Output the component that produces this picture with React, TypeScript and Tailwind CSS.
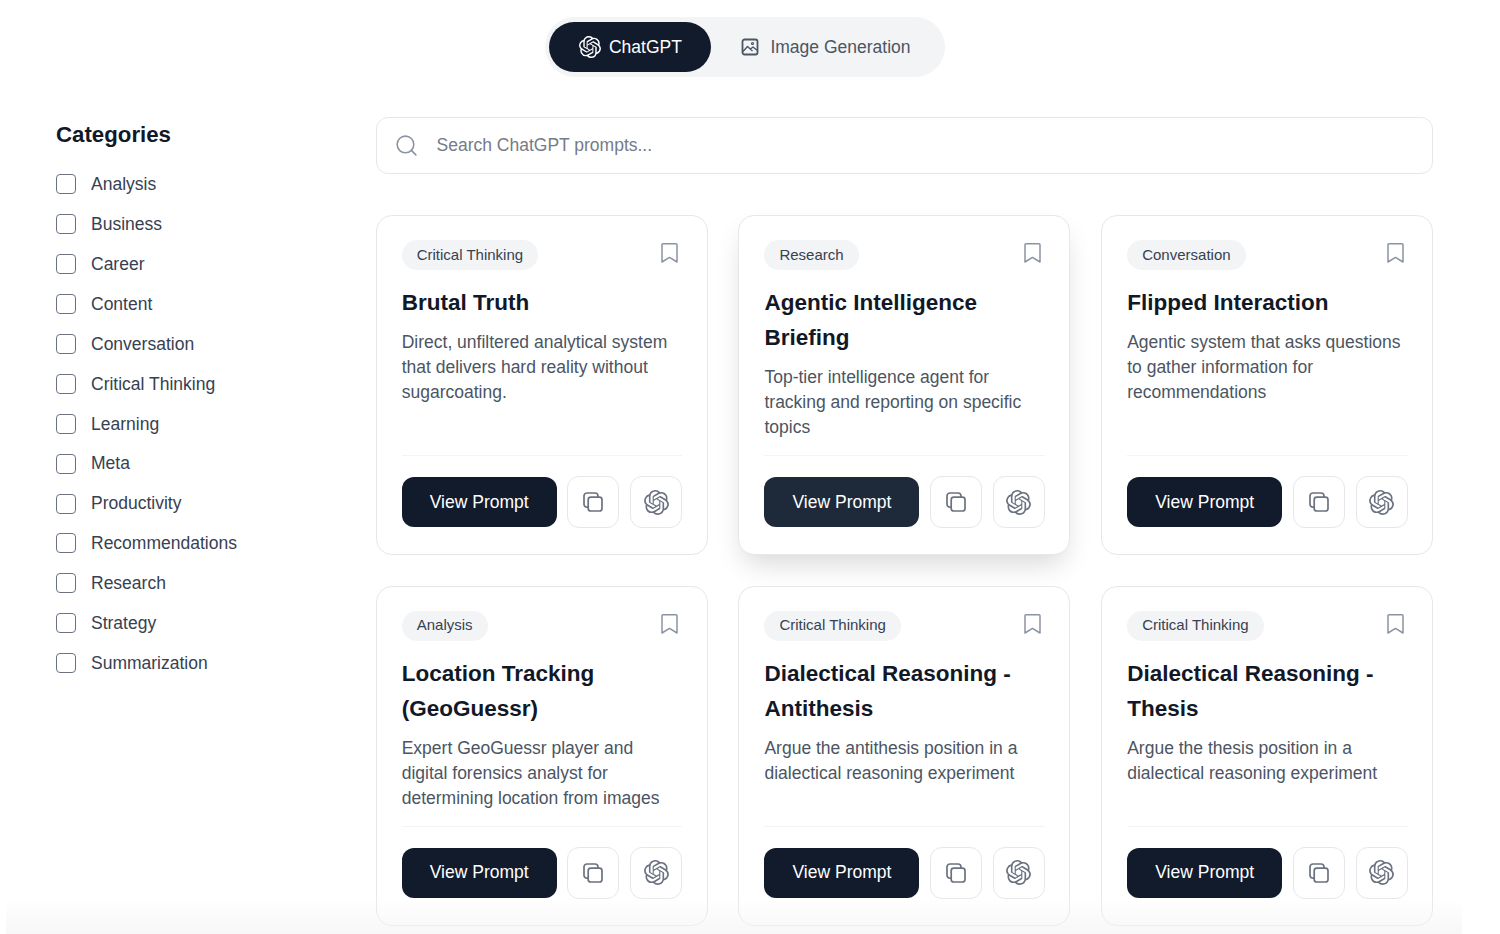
import React from "react";
import { Search } from "lucide-react";
import { SiOpenai } from "react-icons/si";

interface Prompt {
  tag: string;
  title: string;
  description: string;
  hovered?: boolean;
}

const categories = [
  "Analysis",
  "Business",
  "Career",
  "Content",
  "Conversation",
  "Critical Thinking",
  "Learning",
  "Meta",
  "Productivity",
  "Recommendations",
  "Research",
  "Strategy",
  "Summarization",
];

const prompts: Prompt[] = [
  {
    tag: "Critical Thinking",
    title: "Brutal Truth",
    description: "Direct, unfiltered analytical system that delivers hard reality without sugarcoating.",
  },
  {
    tag: "Research",
    title: "Agentic Intelligence Briefing",
    description: "Top-tier intelligence agent for tracking and reporting on specific topics",
    hovered: true,
  },
  {
    tag: "Conversation",
    title: "Flipped Interaction",
    description: "Agentic system that asks questions to gather information for recommendations",
  },
  {
    tag: "Analysis",
    title: "Location Tracking (GeoGuessr)",
    description: "Expert GeoGuessr player and digital forensics analyst for determining location from images",
  },
  {
    tag: "Critical Thinking",
    title: "Dialectical Reasoning - Antithesis",
    description: "Argue the antithesis position in a dialectical reasoning experiment",
  },
  {
    tag: "Critical Thinking",
    title: "Dialectical Reasoning - Thesis",
    description: "Argue the thesis position in a dialectical reasoning experiment",
  },
];

const BookmarkIcon = () => (
  <svg viewBox="0 0 17 20" className="mr-[4px] mt-[3px] h-[20px] w-[17px] text-[#8b93a3]" fill="none" stroke="currentColor" strokeWidth={1.5} strokeLinejoin="round">
    <path d="M1 1.8a1 1 0 0 1 1-1h13a1 1 0 0 1 1 1v17.2l-7.5-4.6L1 19z" />
  </svg>
);

const CopyIcon = () => (
  <svg viewBox="0 0 20 20" className="h-[20px] w-[20px]" fill="none" stroke="currentColor" strokeWidth={1.7}>
    <rect x="5.2" y="5.2" width="13.8" height="13.8" rx="2.6" />
    <path d="M5.2 15.2H4a3 3 0 0 1-3-3V4a3 3 0 0 1 3-3h8a3 3 0 0 1 3 3v1.2" />
  </svg>
);

const PictureIcon = () => (
  <svg viewBox="0 0 18 18" className="h-[18px] w-[18px]" fill="none" stroke="currentColor" strokeWidth={1.8} strokeLinejoin="round">
    <rect x="1.5" y="1.5" width="15" height="15" rx="2" />
    <path d="M2 13.5 6.5 8.5 11.5 13M9.5 11 12 9l4 3.2" strokeWidth={1.4} />
    <circle cx="11.5" cy="5.5" r="1" strokeWidth={1.2} />
  </svg>
);

const PromptCard: React.FC<{ prompt: Prompt }> = ({ prompt }) => (
  <div
    className={
      prompt.hovered
        ? "flex h-[340px] flex-col rounded-2xl border border-[#e5e7eb] bg-white pl-[25.2px] pr-[24.5px] pt-[24px] shadow-[0_14px_28px_-6px_rgba(0,0,0,0.16)]"
        : "flex h-[340px] flex-col rounded-2xl border border-[#e5e7eb] bg-white pl-[25.2px] pr-[24.5px] pt-[24px]"
    }
  >
    {/* Tag + bookmark */}
    <div className="flex items-start justify-between">
      <span className="flex h-[30px] items-center rounded-full bg-[#f3f4f6] px-[15px] text-[15px] text-[#374151]">
        {prompt.tag}
      </span>
      <BookmarkIcon />
    </div>

    <h3 className="mt-[15px] text-[22.5px] font-bold leading-[35px] text-[#111827]">{prompt.title}</h3>
    <p className="mt-[10px] text-[17.5px] leading-[25px] text-[#4b5563]">{prompt.description}</p>

    {/* Actions */}
    <div className="mt-auto mb-[26px] border-t border-[#f3f4f6] pt-[20px]">
      <div className="flex items-center justify-between">
        <button
          className={
            prompt.hovered
              ? "h-[50px] w-[155px] rounded-[12px] bg-[#1e2a3a] text-[17.5px] text-white"
              : "h-[50px] w-[155px] rounded-[12px] bg-[#111b2c] text-[17.5px] text-white"
          }
        >
          View Prompt
        </button>
        <div className="flex gap-[11px]">
          <button className="flex h-[52px] w-[52px] items-center justify-center rounded-[12px] border border-[#e5e7eb] text-[#6b7280]">
            <CopyIcon />
          </button>
          <button className="flex h-[52px] w-[52px] items-center justify-center rounded-[12px] border border-[#e5e7eb] text-[#6b7280]">
            <SiOpenai className="h-[25px] w-[25px]" />
          </button>
        </div>
      </div>
    </div>
  </div>
);

const App: React.FC = () => {
  return (
    <div className="relative h-[934px] overflow-hidden bg-white [font-family:'Liberation_Sans',Arial,sans-serif]">
      {/* Tabs */}
      <div className="flex justify-center pr-[10px] pt-[17px]">
        <div className="flex h-[60px] items-center rounded-full bg-[#f3f4f6] px-[4px]">
          <button className="flex h-[50px] items-center gap-[8px] rounded-full bg-[#111b2c] px-[29.5px] text-[17.5px] text-white">
            <SiOpenai className="h-[22px] w-[22px]" />
            ChatGPT
          </button>
          <button className="flex h-[50px] items-center gap-[11px] px-[30px] text-[17.5px] text-[#4b5563]">
            <PictureIcon />
            Image Generation
          </button>
        </div>
      </div>

      <div className="flex pl-[56px] pr-[67px] pt-[40px]">
        {/* Sidebar */}
        <aside className="w-[319.5px] shrink-0">
          <h2 className="mt-[2px] text-[22.25px] font-bold leading-[32px] text-[#111827]">Categories</h2>
          <ul className="mt-[23px] flex flex-col gap-[19.95px]">
            {categories.map((c) => (
              <li key={c} className="flex h-[20px] items-center gap-[15px] text-[17.5px] text-[#374151]">
                <span className="h-[20px] w-[20px] rounded-[4px] border-[1.5px] border-[#6b7280]" />
                {c}
              </li>
            ))}
          </ul>
        </aside>

        {/* Main */}
        <main className="min-w-0 flex-1">
          <div className="flex h-[57px] items-center gap-[18px] rounded-xl border border-[#e5e7eb] pl-[17px] text-[17.5px] text-[#757b87]">
            <Search className="h-[25px] w-[25px] text-[#8b93a3]" strokeWidth={1.5} />
            Search ChatGPT prompts...
          </div>
          <div className="mt-[41px] grid grid-cols-3 gap-x-[30.75px] gap-y-[30.5px]">
            {prompts.map((p) => (
              <PromptCard key={p.title} prompt={p} />
            ))}
          </div>
        </main>
      </div>

      {/* Fade at the bottom edge */}
      <div className="absolute bottom-0 left-[6px] right-[38px] h-[36px] bg-gradient-to-b from-white/0 to-[#f4f4f4]/70" />
    </div>
  );
};

export default App;
